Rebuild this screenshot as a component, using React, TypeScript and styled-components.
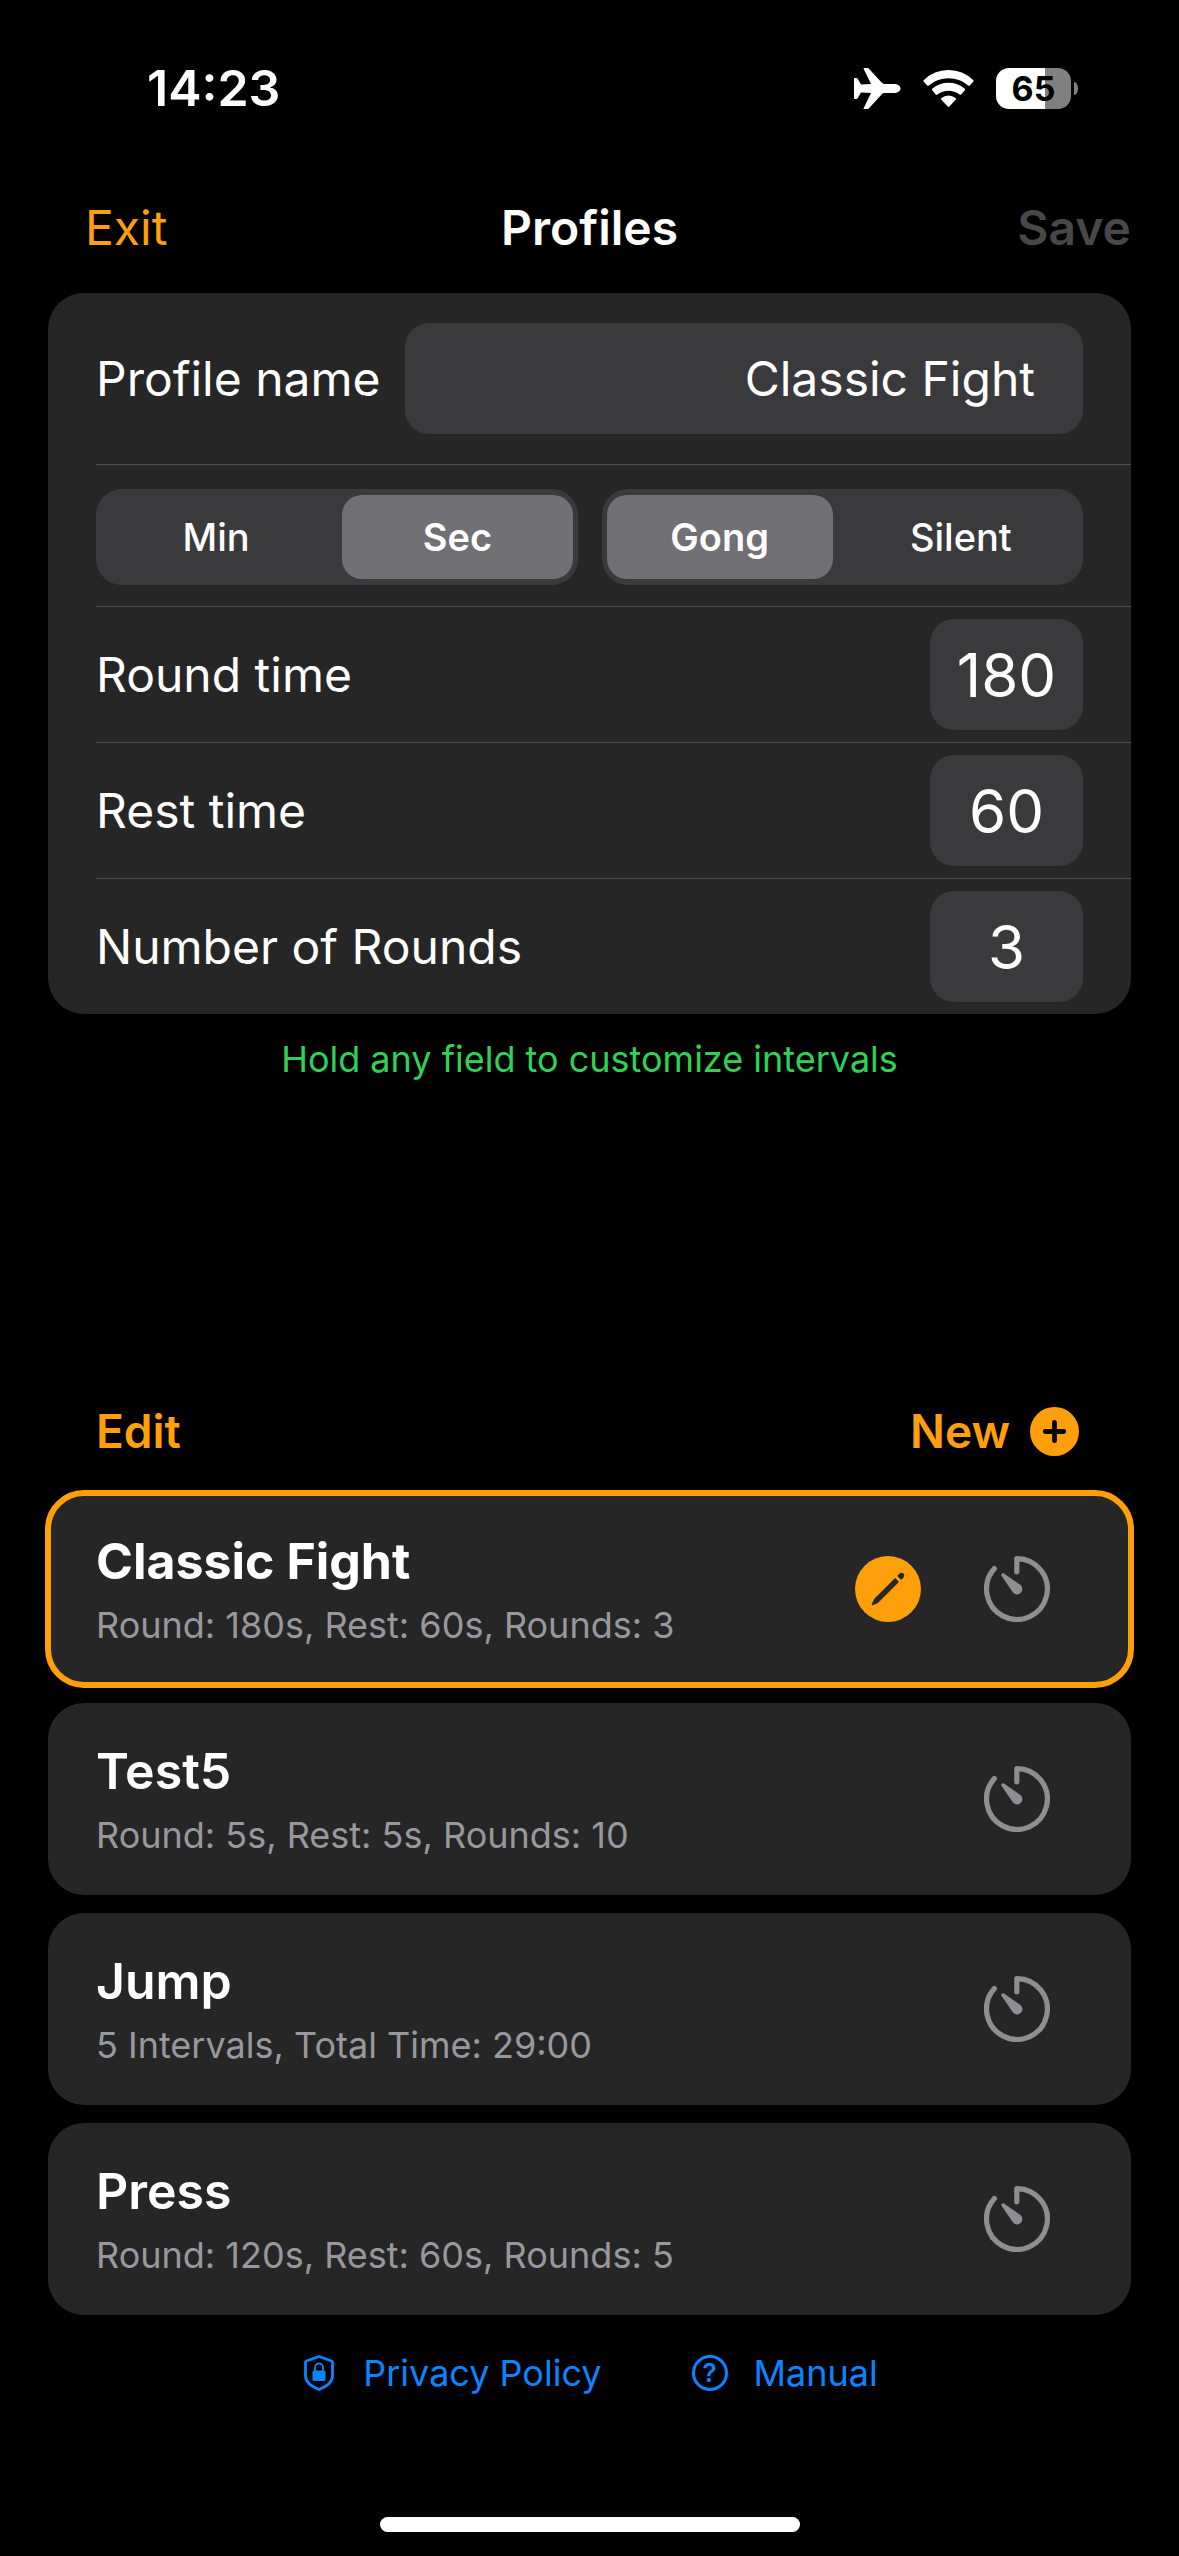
import React, { useState } from "react";
import styled, { createGlobalStyle } from "styled-components";

const color = {
  accent: "#ff9f0a",
  card: "#262626",
  field: "#3a3a3c",
  selected: "#707075",
  line: "#4f4f51",
  muted: "#98989f",
  icon: "#8e8e93",
  disabled: "#48484a",
  green: "#30d158",
  link: "#0a84ff",
};

const GlobalStyle = createGlobalStyle`
  *, *::before, *::after { box-sizing: border-box; }
  body {
    margin: 0;
    background: #000;
    color: #fff;
    font-family: Inter, "Liberation Sans", sans-serif;
    font-size: 48px;
    line-height: 60px;
  }
  button, input { font: inherit; color: inherit; }
  button { border: 0; padding: 0; background: none; cursor: pointer; }
`;

const Screen = styled.div`
  min-height: 100vh;
  display: flex;
  flex-direction: column;
`;

const StatusBar = styled.div`
  height: 176px;
  flex: none;
  display: flex;
  align-items: center;
  justify-content: space-between;
  padding: 0 101px 0 147px;
`;

const Clock = styled.time`
  font-size: 50px;
  font-weight: 600;
`;

const StatusIcons = styled.div`
  display: flex;
  align-items: center;
  gap: 22px;
`;

const Battery = styled.div`
  display: flex;
  align-items: center;
  gap: 3px;
`;

const BatteryBody = styled.div<{ $level: number }>`
  width: 75px;
  height: 41px;
  border-radius: 13px;
  background: linear-gradient(
    to right,
    #fff ${(p) => p.$level}%,
    #808080 ${(p) => p.$level}%
  );
  color: #000;
  font-size: 34px;
  line-height: 41px;
  font-weight: 700;
  text-align: center;
`;

const BatteryTip = styled.div`
  width: 4px;
  height: 13px;
  border-radius: 0 4px 4px 0 / 0 7px 7px 0;
  background: #808080;
`;

const NavBar = styled.header`
  display: grid;
  grid-template-columns: 1fr auto 1fr;
  align-items: center;
  height: 104px;
  margin-bottom: 13px;
  padding: 0 48px;
`;

const ExitButton = styled.button`
  justify-self: start;
  padding-left: 37px;
  color: ${color.accent};
`;

const Title = styled.h1`
  margin: 0;
  font-size: 48px;
  font-weight: 600;
`;

const SaveButton = styled.button`
  justify-self: end;
  font-weight: 600;
  color: ${color.disabled};
  cursor: default;
`;

const Main = styled.main`
  flex: 1;
  display: flex;
  flex-direction: column;
  padding: 0 48px;
`;

const Form = styled.form`
  padding-left: 48px;
  border-radius: 36px;
  background: ${color.card};
`;

const Row = styled.div<{ $pad: string }>`
  display: flex;
  align-items: center;
  justify-content: space-between;
  gap: 24px;
  padding: ${(p) => p.$pad};
  & + & {
    border-top: 1px solid ${color.line};
  }
`;

const Field = styled.input`
  height: 111px;
  min-width: 0;
  border: 0;
  border-radius: 24px;
  outline: 0;
  background: ${color.field};
`;

const NameField = styled(Field)`
  flex: 1;
  padding: 0 48px;
  text-align: right;
`;

const NumberField = styled(Field)`
  width: 153px;
  padding: 0;
  text-align: center;
  font-size: 60px;
`;

const Segments = styled.fieldset`
  flex: 1;
  min-width: 0;
  height: 96px;
  display: flex;
  gap: 11px;
  margin: 0;
  padding: 6px 5px;
  border: 0;
  border-radius: 26px;
  background: ${color.field};
`;

const Segment = styled.label<{ $grow: number }>`
  flex: ${(p) => p.$grow} 1 0;
  display: flex;
  align-items: center;
  justify-content: center;
  border-radius: 20px;
  font-size: 38px;
  font-weight: 500;
  cursor: pointer;
  &:has(input:checked) {
    background: ${color.selected};
    font-weight: 600;
  }
`;

const HiddenRadio = styled.input`
  appearance: none;
  width: 0;
  height: 0;
  margin: 0;
`;

const Hint = styled.p`
  margin: 23px 0 0;
  font-size: 36px;
  line-height: 44px;
  text-align: center;
  color: ${color.green};
`;

const ListBar = styled.div`
  display: flex;
  align-items: center;
  justify-content: space-between;
  height: 58px;
  margin-top: auto;
  margin-bottom: 33px;
  padding: 0 52px 0 48px;
`;

const ListAction = styled.button`
  display: flex;
  align-items: center;
  gap: 20px;
  font-size: 46px;
  font-weight: 600;
  color: ${color.accent};
`;

const List = styled.ul`
  display: flex;
  flex-direction: column;
  gap: 18px;
  margin: 0;
  padding: 0;
  list-style: none;
`;

const Card = styled.li<{ $active: boolean }>`
  display: flex;
  align-items: center;
  gap: 63px;
  height: 192px;
  padding: 0 81px 0 48px;
  border-radius: 36px;
  background: ${color.card};
  outline: ${(p) => (p.$active ? `6px solid ${color.accent}` : "none")};
  outline-offset: -3px;
`;

const CardText = styled.button`
  flex: 1;
  display: flex;
  flex-direction: column;
  gap: 12px;
  text-align: left;
`;

const CardName = styled.span<{ $active: boolean }>`
  font-size: 50px;
  font-weight: ${(p) => (p.$active ? 700 : 600)};
`;

const CardDetail = styled.span`
  font-size: 36px;
  line-height: 44px;
  color: ${color.muted};
`;

const IconButton = styled.button`
  display: flex;
  color: ${color.icon};
`;

const Footer = styled.footer`
  display: flex;
  justify-content: center;
  gap: 90px;
  padding: 36px 0 122px;
`;

const FooterLink = styled.a`
  display: flex;
  align-items: center;
  gap: 26px;
  font-size: 36px;
  line-height: 44px;
  color: ${color.link};
  text-decoration: none;
`;

const QuestionBadge = styled.span`
  width: 36px;
  height: 36px;
  border: 3px solid currentColor;
  border-radius: 50%;
  font-size: 26px;
  line-height: 30px;
  font-weight: 600;
  text-align: center;
`;

const HomeIndicator = styled.div`
  width: 420px;
  height: 15px;
  margin: 0 auto 24px;
  border-radius: 8px;
  background: #fff;
`;

const PlaneIcon = () => (
  <svg width="47" height="41" viewBox="0 0 47 41" fill="#fff" aria-hidden="true">
    <path d="M9.5 0.6Q9.5 0 10.2 0H13.2Q14.4 0 15.2 1L27.6 14.6Q28.8 16 30.5 16H40.5C44 16 46.5 18.3 46.5 20.5S44 25 40.5 25H30.5Q28.8 25 27.6 26.4L15.2 40Q14.4 41 13.2 41H10.2Q9.5 41 9.5 40.4L17 25L7 24.4L4 29.8Q3.4 31 2.4 31H0.7Q0 31 0 30.3V10.7Q0 10 0.7 10H2.4Q3.4 10 4 11.2L7 16.6L17 16Z" />
  </svg>
);

const WifiIcon = () => (
  <svg width="51" height="37" viewBox="0 0 51 37" fill="#fff" aria-hidden="true">
    <path d="M0.8 11.8Q0 10.9 0.9 10.1A35 35 0 0 1 50.1 10.1Q51 10.9 50.2 11.8L46.8 15.5Q46 16.2 45.1 15.5A30 30 0 0 0 5.9 15.5Q5 16.2 4.2 15.5Z" />
    <path d="M9.2 20.2Q8.6 19.4 9.4 18.6A25 25 0 0 1 41.6 18.6Q42.4 19.4 41.8 20.2L38.2 24.4Q37.4 25 36.5 24.4A18 18 0 0 0 14.5 24.4Q13.6 25 12.8 24.4Z" />
    <path d="M18.2 29.6Q17.6 28.8 18.5 28A11 11 0 0 1 32.5 28Q33.4 28.8 32.8 29.6L26.3 36.6Q25.5 37.4 24.7 36.6Z" />
  </svg>
);

const PlusIcon = () => (
  <svg width="49" height="49" viewBox="0 0 49 49" aria-hidden="true">
    <circle cx="24.5" cy="24.5" r="24.5" fill={color.accent} />
    <path d="M24.5 15.3V33.7M15.3 24.5H33.7" stroke="#000" strokeWidth="4.8" strokeLinecap="round" />
  </svg>
);

const PencilIcon = () => (
  <svg width="66" height="66" viewBox="0 0 66 66" aria-hidden="true">
    <circle cx="33" cy="33" r="33" fill={color.accent} />
    <g fill={color.card}>
      <path d="M39.6 22.6Q40.2 22 40.8 22.6L43.4 25.2Q44 25.8 43.4 26.4L23.4 46.4Q22.8 47 22 47.4L17.6 49.2Q16.4 49.4 16.8 48.2L18.6 44Q19 43.2 19.6 42.6Z" />
      <path d="M42.8 20.6Q42.1 19.9 42.8 19.2L44.6 17.6Q46.8 15.9 48.6 17.6Q50.1 19.4 48.5 21.5L46.8 23.3Q46.1 23.9 45.4 23.2Z" />
    </g>
  </svg>
);

const TimerIcon = () => (
  <svg width="66" height="66" viewBox="0 0 66 66" aria-hidden="true">
    <path
      d="M32.8 15.8V2.6A30.4 30.4 0 1 1 10.4 12.6"
      fill="none"
      stroke="currentColor"
      strokeWidth="5.2"
      strokeLinecap="round"
      strokeLinejoin="round"
    />
    <path
      d="M19.6 17.3L36.2 28.8A5.3 5.3 0 1 1 28.8 36.2L17.3 19.6Q16.9 16.9 19.6 17.3Z"
      fill="currentColor"
    />
  </svg>
);

const ShieldIcon = () => (
  <svg width="36" height="36" viewBox="0 0 36 36" aria-hidden="true">
    <path
      d="M18 1.5L30.6 6Q31.5 6.4 31.5 7.4V21C31.5 27.5 25.5 31.4 18 34.5C10.5 31.4 4.5 27.5 4.5 21V7.4Q4.5 6.4 5.4 6Z"
      fill="none"
      stroke="currentColor"
      strokeWidth="2.8"
      strokeLinejoin="round"
    />
    <rect x="11.5" y="15.5" width="13" height="10.5" rx="1.8" fill="currentColor" />
    <path d="M14 16V12.5a4 4 0 0 1 8 0V16" fill="none" stroke="currentColor" strokeWidth="1.8" />
  </svg>
);

type Option = { label: string; grow: number };

const unitOptions: Option[] = [
  { label: "Min", grow: 1 },
  { label: "Sec", grow: 1 },
];
const soundOptions: Option[] = [
  { label: "Gong", grow: 28 },
  { label: "Silent", grow: 29 },
];

function SegmentedControl(props: {
  name: string;
  options: Option[];
  value: string;
  onChange: (value: string) => void;
}) {
  return (
    <Segments aria-label={props.name}>
      {props.options.map(({ label, grow }) => (
        <Segment key={label} $grow={grow}>
          <HiddenRadio
            type="radio"
            name={props.name}
            checked={props.value === label}
            onChange={() => props.onChange(label)}
          />
          {label}
        </Segment>
      ))}
    </Segments>
  );
}

const numberRows = [
  { id: "round", label: "Round time", value: "180" },
  { id: "rest", label: "Rest time", value: "60" },
  { id: "count", label: "Number of Rounds", value: "3" },
];

const profiles = [
  { name: "Classic Fight", detail: "Round: 180s, Rest: 60s, Rounds: 3" },
  { name: "Test5", detail: "Round: 5s, Rest: 5s, Rounds: 10" },
  { name: "Jump", detail: "5 Intervals, Total Time: 29:00" },
  { name: "Press", detail: "Round: 120s, Rest: 60s, Rounds: 5" },
];

export default function App() {
  const [unit, setUnit] = useState("Sec");
  const [sound, setSound] = useState("Gong");
  const [active, setActive] = useState("Classic Fight");

  return (
    <Screen>
      <GlobalStyle />
      <StatusBar>
        <Clock>14:23</Clock>
        <StatusIcons>
          <PlaneIcon />
          <WifiIcon />
          <Battery>
            <BatteryBody $level={65}>65</BatteryBody>
            <BatteryTip />
          </Battery>
        </StatusIcons>
      </StatusBar>

      <NavBar>
        <ExitButton type="button">Exit</ExitButton>
        <Title>Profiles</Title>
        <SaveButton type="button" disabled>
          Save
        </SaveButton>
      </NavBar>

      <Main>
        <Form onSubmit={(e) => e.preventDefault()}>
          <Row $pad="30px 48px 30px 0">
            <label htmlFor="name">Profile name</label>
            <NameField id="name" type="text" defaultValue="Classic Fight" />
          </Row>
          <Row $pad="24px 48px 21px 0">
            <SegmentedControl name="Unit" options={unitOptions} value={unit} onChange={setUnit} />
            <SegmentedControl name="Sound" options={soundOptions} value={sound} onChange={setSound} />
          </Row>
          {numberRows.map((row) => (
            <Row key={row.id} $pad="12px 48px 12px 0">
              <label htmlFor={row.id}>{row.label}</label>
              <NumberField id={row.id} type="text" inputMode="numeric" defaultValue={row.value} />
            </Row>
          ))}
        </Form>
        <Hint>Hold any field to customize intervals</Hint>

        <ListBar>
          <ListAction type="button">Edit</ListAction>
          <ListAction type="button">
            New
            <PlusIcon />
          </ListAction>
        </ListBar>
        <List>
          {profiles.map(({ name, detail }) => (
            <Card key={name} $active={name === active}>
              <CardText type="button" onClick={() => setActive(name)}>
                <CardName $active={name === active}>{name}</CardName>
                <CardDetail>{detail}</CardDetail>
              </CardText>
              {name === active && (
                <IconButton type="button" aria-label={`Edit ${name}`}>
                  <PencilIcon />
                </IconButton>
              )}
              <IconButton type="button" aria-label={`Start ${name}`}>
                <TimerIcon />
              </IconButton>
            </Card>
          ))}
        </List>
      </Main>

      <Footer>
        <FooterLink href="#privacy">
          <ShieldIcon />
          Privacy Policy
        </FooterLink>
        <FooterLink href="#manual">
          <QuestionBadge aria-hidden="true">?</QuestionBadge>
          Manual
        </FooterLink>
      </Footer>
      <HomeIndicator />
    </Screen>
  );
}
